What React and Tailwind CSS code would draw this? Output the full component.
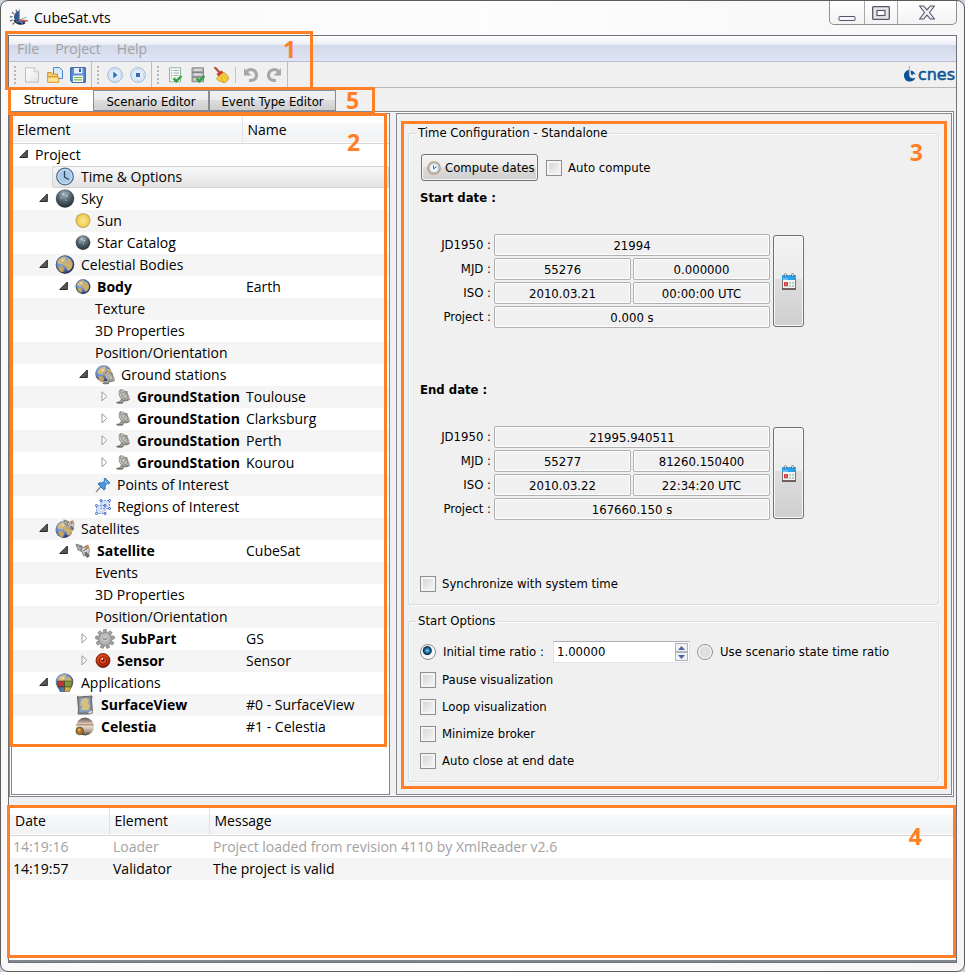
import React from "react";

const UI = "font-['Open_Sans','Noto_Sans',sans-serif]";
const FORM = "font-['DejaVu_Sans_Condensed','DejaVu_Sans',sans-serif]";

/* ---------- shared gradients ---------- */

function Gradients() {
  return (
    <svg width="0" height="0" className="absolute" aria-hidden="true">
      <defs>
        <radialGradient id="gEarth" cx="40%" cy="34%" r="66%">
          <stop offset="0" stopColor="#a8c4ec" />
          <stop offset=".6" stopColor="#5f82c0" />
          <stop offset="1" stopColor="#26345c" />
        </radialGradient>
        <radialGradient id="gSky" cx="45%" cy="28%" r="72%">
          <stop offset="0" stopColor="#a9b8c2" />
          <stop offset=".45" stopColor="#5b6b76" />
          <stop offset="1" stopColor="#222c33" />
        </radialGradient>
        <radialGradient id="gSun" cx="50%" cy="50%" r="50%">
          <stop offset="0" stopColor="#fbe992" />
          <stop offset=".75" stopColor="#efcf55" />
          <stop offset="1" stopColor="#b59a4a" />
        </radialGradient>
        <linearGradient id="gDish" x1="0" y1="0" x2="1" y2="1">
          <stop offset="0" stopColor="#e8e8e4" />
          <stop offset="1" stopColor="#84827c" />
        </linearGradient>
        <radialGradient id="gRed" cx="45%" cy="40%" r="60%">
          <stop offset="0" stopColor="#ff6a3a" />
          <stop offset=".6" stopColor="#d93a10" />
          <stop offset="1" stopColor="#6b1903" />
        </radialGradient>
        <linearGradient id="gJup" x1="0" y1="0" x2="0" y2="1">
          <stop offset="0" stopColor="#5e544a" />
          <stop offset=".22" stopColor="#a8988a" />
          <stop offset=".34" stopColor="#d8cbbb" />
          <stop offset=".4" stopColor="#b58a6c" />
          <stop offset=".48" stopColor="#e6dccf" />
          <stop offset=".75" stopColor="#b5a593" />
          <stop offset="1" stopColor="#4b3f37" />
        </linearGradient>
        <linearGradient id="gPaper" x1="0" y1="0" x2="1" y2="1">
          <stop offset="0" stopColor="#ffffff" />
          <stop offset="1" stopColor="#e4e4e4" />
        </linearGradient>
      </defs>
    </svg>
  );
}

const Land = () => (
  <g>
    <path d="M3 5.500 5.500 3 9 1.600l2.600 1-1.200 1.600 1 2-2.600.6-1.600 2.200L4.600 9 2.600 8z" fill="#d6b976" />
    <path d="m12 3.500 3 .5 2.600 4.500-.6 4-2.800 3.300-2-.8-.8-3-2.400-1.600.3-3 2.400-1z" fill="#cfae66" />
    <path d="m3.500 11 3.600.3 2 2.200-.8 3.200L6 17.200 3.600 14.500z" fill="#c7a45c" />
    <path d="m6 5 2.500-1 .6 1.400-2 .8z" fill="#efdfae" />
  </g>
);

const Svg = ({ s = 20, children, vb = 20 }) => (
  <svg width={s} height={s} viewBox={`0 0 ${vb} ${vb}`} className="block shrink-0" aria-hidden="true">
    {children}
  </svg>
);

const Clock = () => (
  <Svg>
    <circle cx="10" cy="9.500" r="8.300" fill="#a9c8e8" stroke="#4d6d92" strokeWidth="1.300" />
    <circle cx="10" cy="9.500" r="7" fill="none" stroke="#d7e7f6" strokeWidth=".8" />
    <path d="M9.500 4v6L14 12.500" fill="none" stroke="#2d4560" strokeWidth="1.300" />
  </Svg>
);
const Sky = ({ s = 20 }) => (
  <Svg s={s}>
    <circle cx="10" cy="9.500" r="9.200" fill="url(#gSky)" />
    <g fill="#e6edf2">
      <circle cx="8" cy="5" r=".8" />
      <circle cx="12" cy="7" r=".7" />
      <circle cx="6" cy="9" r=".6" />
      <circle cx="11" cy="11" r=".6" />
      <circle cx="13" cy="4" r=".6" />
    </g>
  </Svg>
);
const Sun = () => (
  <Svg s={16}>
    <circle cx="10" cy="9.500" r="9.300" fill="url(#gSun)" />
  </Svg>
);
const Earth = ({ s = 20 }) => (
  <Svg s={s}>
    <circle cx="10" cy="9.500" r="9.200" fill="url(#gEarth)" />
    <Land />
    <circle cx="10" cy="9.500" r="8.800" fill="none" stroke="#1b2440" strokeOpacity=".4" strokeWidth="1" />
  </Svg>
);
const DishShape = () => (
  <g>
    <ellipse cx="6" cy="17" rx="4.500" ry="1.500" fill="#77716d" />
    <path d="M9 11 5 17h5l3-4z" fill="#a39d97" stroke="#635d58" strokeWidth=".6" />
    <path d="M6.500 1C4 4 5 10 9.500 13.500c3 2.200 6.500 1.500 8.500-.5z" fill="url(#gDish)" stroke="#66625c" strokeWidth=".8" />
    <path d="M6.500 1c5-1 11 5 11.500 12-5 1-11.500-5-11.500-12z" fill="#c0bfb9" stroke="#77736c" strokeWidth=".8" />
    <path d="m12 8 3-5M8.500 4.500 15 3M15.500 11.500 15 3" stroke="#6e6a64" strokeWidth=".8" />
  </g>
);
const Dish = () => (
  <Svg s={16}>
    <DishShape />
  </Svg>
);
const GroundIcon = () => (
  <Svg>
    <circle cx="8.500" cy="8.500" r="8.300" fill="url(#gEarth)" />
    <Land />
    <g transform="translate(6.500 6) scale(.72)">
      <DishShape />
    </g>
  </Svg>
);
const Pin = () => (
  <Svg s={16} vb={16}>
    <path d="M1 15 6 9.500" stroke="#7e8890" strokeWidth="1.300" />
    <path d="m10 1 5 5-1.500.8-1.500-.3-2 2.500.2 3L9 13 3 7l1-1.200 3 .2 2.500-2L9.200 2z" fill="#4a9ae0" stroke="#1f5fa4" strokeWidth=".8" />
    <path d="m9.800 3.500 2.700 2.600" stroke="#c2e0f8" strokeWidth="1" />
  </Svg>
);
const Regions = () => (
  <Svg s={16} vb={16}>
    <path d="M5.500 1.500h9v8h-5v5h-8v-8h4z" fill="#d3e0f5" />
    <path d="M6 1.500h8.500v8H6zM1.500 6.500H10v8H1.500z" fill="none" stroke="#7d9bdc" strokeWidth="1" strokeDasharray="2 1" />
    <g fill="#fff" stroke="#2c55cc" strokeWidth="1">
      {[[6, 1.5], [14.5, 1.5], [14.5, 9.5], [1.5, 6.5], [10, 6.5], [1.5, 14.5], [10, 14.5]].map(([x, y]) => (
        <circle key={`${x}-${y}`} cx={x} cy={y} r="1" />
      ))}
    </g>
  </Svg>
);
const SatShape = () => (
  <g>
    <path d="m1 1 6 2 1 6-5-2z" fill="#8a8d90" stroke="#55585a" strokeWidth=".6" />
    <path d="m3 2 2 6M1.800 4.500l5.700 1.700" stroke="#c9ccd0" strokeWidth=".6" />
    <path d="m6 6 6-3.500 2.500 4-1 5.500-5 1z" fill="#d6d4d0" stroke="#6c6762" strokeWidth=".7" />
    <path d="m9 3.500 4-2 1.500 3-3 2.300z" fill="#b98b55" />
    <path d="m11.500 9 3.500 4-3 2-2.500-4z" fill="#6e6f70" />
    <path d="m8 8 3.500-2M8.500 10.500 12 9" stroke="#555" strokeWidth=".8" />
  </g>
);
const Sat = () => (
  <Svg s={16} vb={16}>
    <SatShape />
  </Svg>
);
const SatEarth = () => (
  <Svg>
    <g transform="translate(0 1)">
      <circle cx="9" cy="9.500" r="8.500" fill="url(#gEarth)" />
      <Land />
    </g>
    <g transform="translate(8 0) scale(.76)">
      <SatShape />
    </g>
  </Svg>
);
const Gear = () => (
  <Svg>
    <g fill="#a2a2a2" stroke="#6b6b6b" strokeWidth=".5">
      {[0, 40, 80, 120, 160, 200, 240, 280, 320].map((a) => (
        <path key={a} d="m8 5 .6-4.500h2.800L12 5z" transform={`rotate(${a} 10 10)`} />
      ))}
    </g>
    <circle cx="10" cy="10" r="6.200" fill="#b4b4b4" stroke="#777" strokeWidth=".5" />
    <circle cx="10" cy="8.500" r="3.300" fill="#8e8e8e" stroke="#e2e2e2" strokeWidth=".8" />
    <path d="M8 6.500h4v3H8z" fill="#c9c9c9" />
  </Svg>
);
const Sensor = () => (
  <Svg s={16} vb={16}>
    <circle cx="8" cy="7.500" r="7" fill="url(#gRed)" stroke="#5f1c08" strokeWidth=".8" />
    <circle cx="8" cy="7.500" r="3.800" fill="none" stroke="#8a1a00" strokeWidth="1" />
    <circle cx="8" cy="7" r="1.600" fill="#501408" />
    <circle cx="7.300" cy="6" r=".9" fill="#ffd8c8" />
  </Svg>
);
const Apps = () => (
  <Svg>
    <circle cx="9.500" cy="9" r="8.800" fill="url(#gEarth)" />
    <Land />
    <path d="M2.500 8h7v6H3z" fill="#b93a34" stroke="#3c2424" strokeWidth=".5" />
    <path d="M9.500 8h7.500l-.5 6h-7z" fill="#7f9a3c" stroke="#2e3a1c" strokeWidth=".5" />
    <path d="M3.500 14h6v4.500H5z" fill="#4779b0" stroke="#1e2e44" strokeWidth=".5" />
    <path d="M9.500 14h6.500l-1.500 4.500h-5z" fill="#d5ab45" stroke="#4a3a14" strokeWidth=".5" />
  </Svg>
);
const MapIcon = () => (
  <Svg>
    <path d="m2.500 1.500 2 .5L17 1l-.5 4 1 13-4 1H3l.5-4z" fill="#7b8896" stroke="#6a6558" strokeWidth="1" />
    <path d="m4.500 3 10-.5.5 3 .5 11-11 .5z" fill="#86a2c0" />
    <path d="m7 4 4-1 3 2-1 3 2 3-2 4H6l1.500-4L5 10l1-3z" fill="#d6bf80" />
    <path d="M13 19c0-2 1-3.500 4.500-3.500V18z" fill="#ddd" stroke="#777" strokeWidth=".5" />
  </Svg>
);
const Celestia = () => (
  <Svg>
    <circle cx="10" cy="9.500" r="9" fill="url(#gJup)" />
    <circle cx="4.700" cy="14" r="3.800" fill="#a5762e" stroke="#46300f" strokeWidth=".6" />
    <circle cx="4.300" cy="13" r="1.400" fill="#dcb25c" />
  </Svg>
);

const ArrowOpen = () => (
  <svg width="9" height="9" viewBox="0 0 9 9" aria-hidden="true">
    <path d="M8.300 0v7.500H.8z" fill="#595959" stroke="#262626" strokeWidth="1" />
  </svg>
);
const ArrowClosed = () => (
  <svg width="9" height="11" viewBox="0 0 9 11" aria-hidden="true">
    <path d="M3 .7v9.200l4.800-4.600z" fill="#fff" stroke="#9a9a9a" strokeWidth="1" />
  </svg>
);

/* ---------- title bar ---------- */

const AppIcon = () => (
  <svg width="20" height="20" viewBox="0 0 20 20" aria-hidden="true">
    <g stroke="#7b7b7b" strokeWidth="1.500">
      <path d="M7 1.500 7.800 4M3 4l2 2M.8 8.500 3.500 9M1 13l2.500-1M3.500 16.500l2-2" />
    </g>
    <path d="M10.500 2.500c-5.500 1.500-7 7-4 10.500 2.500 3 8 2.800 10.500.5l-6.500-1.500z" fill="#35598f" />
    <path d="M5 12c2 4 7 5 11 2.500" fill="none" stroke="#16233c" strokeWidth="1.600" />
    <path d="M10.500 1v11l4 5" fill="none" stroke="#8aa0c4" strokeWidth="1" />
    <path d="m10.500 12 7-3" stroke="#7fae9a" strokeWidth="1" />
    <path d="m10 12 9 1" stroke="#d0564a" strokeWidth="1.300" />
  </svg>
);

function TitleBar() {
  return (
    <header className="flex h-[34px] items-start justify-between pl-px">
      <div className="flex items-center gap-[5px] pt-[6px]">
        <AppIcon />
        <h1 className={`${UI} text-[14px] leading-[22px] text-black`}>CubeSat.vts</h1>
      </div>
      <div className="flex h-6 overflow-hidden rounded-b-[5px] border border-t-0 border-[#8f8f8f] bg-gradient-to-b from-white to-[#f3f3f3]">
        <button aria-label="Minimize" className="flex w-[34px] items-center justify-center">
          <svg width="18" height="18" viewBox="0 0 18 18">
            <rect x="1" y="12.500" width="16" height="4" rx=".5" fill="#f4f4f4" stroke="#52556b" />
          </svg>
        </button>
        <button aria-label="Maximize" className="flex w-[33px] items-center justify-center border-l border-[#a8a8a8]">
          <svg width="18" height="14" viewBox="0 0 18 14">
            <rect x=".7" y=".7" width="16.600" height="12.600" rx=".8" fill="#e6e6e6" stroke="#52556b" strokeWidth="1.300" />
            <rect x="5" y="4.500" width="8" height="5" fill="#fff" stroke="#52556b" strokeWidth="1.200" />
          </svg>
        </button>
        <button aria-label="Close" className="flex w-[59px] items-center justify-center border-l border-[#a8a8a8]">
          <svg width="18" height="15" viewBox="0 0 18 15">
            <path d="M1.500 1h4.200L9 4.800 12.300 1h4.200l-5 6.500 5 6.500h-4.200L9 10.200 5.700 14H1.500l5-6.500z" fill="#ededed" stroke="#52556b" strokeWidth="1.100" strokeLinejoin="round" />
          </svg>
        </button>
      </div>
    </header>
  );
}

/* ---------- callouts ---------- */

const Frame = ({ className }) => (
  <div className={`pointer-events-none absolute z-10 border-[3px] border-[#ff7f27] ${className}`} />
);
const Mark = ({ n, className }) => (
  <span className={`${UI} pointer-events-none absolute z-10 text-[23px] leading-6 font-bold text-[#ff7f27] ${className}`}>{n}</span>
);

/* ---------- tool bar ---------- */

const TNew = () => (
  <Svg s={16} vb={16}>
    <path d="M1.500.8h8.800l4.200 4v10.400h-13z" fill="url(#gPaper)" stroke="#bfbfbf" />
    <path d="M10.300.8v4h4.200" fill="#f4f4f4" stroke="#c6c6c6" />
  </Svg>
);
const TOpen = () => (
  <Svg s={16} vb={16}>
    <path d="M6.500.6h6l3 2.800v8.200h-9z" fill="#dcecfb" stroke="#4a83c6" />
    <path d="M.7 5.500h3.500l1 1.500h5.200v3H.7z" fill="#f7d074" stroke="#cf9226" />
    <path d="M.7 15.300V10h11v5.300z" fill="#fde49a" stroke="#d9962a" />
  </Svg>
);
const TSave = () => (
  <Svg s={16} vb={16}>
    <path d="M.7.7h14.600v14.600H2L.7 14z" fill="#5a8fd4" stroke="#2a569c" />
    <path d="M4 1h8.500v5.500H4z" fill="#e5eefa" />
    <path d="M9 1.500h2V5H9z" fill="#3a66a8" />
    <path d="M3 8.500h10V15H3z" fill="#f6faf0" />
    <path d="M3.800 10.500h8.400M3.800 12.800h8.400" stroke="#7bb648" strokeWidth="1.200" />
  </Svg>
);
const TRound = ({ children }) => (
  <Svg s={16} vb={16}>
    <circle cx="8" cy="8" r="7.300" fill="#f5f9fd" stroke="#8fb0d6" />
    <circle cx="8" cy="8" r="5.600" fill="#e4eefa" stroke="#bdd2ea" strokeWidth=".8" />
    {children}
  </Svg>
);
const Tick = () => <path d="m6.500 11.500 2.700 2.700L14.500 9" fill="none" stroke="#2fa33b" strokeWidth="2.400" />;
const TCheckDoc = () => (
  <Svg s={16} vb={16}>
    <path d="M2.500.8h11v14h-11z" fill="#f7faf8" stroke="#8fb39c" />
    <path d="M4.200 3.500h1M4.200 6h1M4.200 8.500h1M4.200 11h1" stroke="#3f8f57" strokeWidth="1.200" />
    <path d="M6.500 3.500h5.500M6.500 6h5.500M6.500 8.500h5M6.500 11h3" stroke="#9fb0a8" />
    <Tick />
  </Svg>
);
const TCheckDb = () => (
  <Svg s={16} vb={16}>
    <path d="M2 .8h11.500v14H2z" fill="#b5b8ba" stroke="#8a8d90" />
    <path d="M2 5.200h11.500M2 10h11.500" stroke="#6f7274" strokeWidth="1" />
    <path d="M4 3h7.500M4 7.500h7.500M4 12.500h4" stroke="#e3e5e6" strokeWidth="1.300" />
    <Tick />
  </Svg>
);
const TBroom = () => (
  <Svg s={16} vb={16}>
    <path d="m1.500 0 5.500 6" stroke="#a8502a" strokeWidth="2.200" />
    <path d="M3.500 7 8.500 3.500l2 2L5.500 9.500z" fill="#cf3a28" />
    <path d="m5.500 9.500 5-4C14 7 15.500 9.500 15.800 12l-4 3.700C8 15 4.500 13.500 3.500 11.500z" fill="#f4cf3f" stroke="#c08d16" strokeWidth=".8" />
    <path d="m7.500 9.500 3 5M10 8l4 4.500" stroke="#d9a824" strokeWidth=".8" />
  </Svg>
);
const TUndo = ({ flip }) => (
  <Svg s={16} vb={16}>
    <g transform={flip ? "translate(16 0) scale(-1 1)" : undefined}>
      <path d="M3.500 4.200C8 1 13.500 3 13.500 8.200c0 4-3.500 5.800-7.500 5.300" fill="none" stroke="#a6a6a6" strokeWidth="3" />
      <path d="M1 1.200v7.300h7.500z" fill="#a6a6a6" />
    </g>
  </Svg>
);

const ToolButton = ({ label, children }) => (
  <button aria-label={label} className="flex h-[23px] w-[23px] items-center justify-center">
    {children}
  </button>
);
const ToolGroup = ({ children }) => (
  <div className="flex h-[25px] items-center border-r border-[#bdbdbd] pr-[2px]">
    <div className="flex w-[11px] flex-col items-center gap-[2px]">
      {[0, 1, 2, 3, 4].map((i) => (
        <i key={i} className="size-[2px] bg-[#b5b5b5]" />
      ))}
    </div>
    {children}
  </div>
);

const Cnes = () => (
  <div className="flex items-center gap-[2px] pr-px text-[#0b5394]">
    <svg width="12" height="17" viewBox="0 0 12 17" aria-hidden="true">
      <path d="M5.300 0v9" stroke="#8fb0d0" strokeWidth="1" />
      <path d="M5 4C2 4.300 0 6.700 0 9.700 0 13 2.600 15.600 5.800 15.600c2.700 0 4.800-1.600 5.700-4-1.500 1-4 1-5.300-.4C5 10 4.600 7 5 4z" fill="currentColor" />
      <path d="M6.700 4.500c2.500.3 4.500 2.300 4.800 4.500L9 7.500 8.500 9.800C7 8.800 6.500 7 6.700 4.500z" fill="currentColor" />
    </svg>
    <span className="font-['DejaVu_Sans',sans-serif] text-[16px] leading-[22px] [-webkit-text-stroke:0.5px]">cnes</span>
  </div>
);

function Bars() {
  return (
    <div className="relative">
      <nav className={`${UI} flex h-[26px] items-center gap-4 border-b border-[#b8bccb] bg-[linear-gradient(#fff_0,#e9edf5_9px,#d1d8ea_9px,#e0e5f5_100%)] pl-2 text-[14px] text-[#a2a2a2]`}>
        <button>File</button>
        <button>Project</button>
        <button>Help</button>
      </nav>
      <div className="flex h-[26px] items-center justify-between border-b border-[#b8b8b8]">
        <div className="flex">
          <ToolGroup>
            <ToolButton label="New"><TNew /></ToolButton>
            <ToolButton label="Open"><TOpen /></ToolButton>
            <ToolButton label="Save"><TSave /></ToolButton>
          </ToolGroup>
          <ToolGroup>
            <ToolButton label="Run">
              <TRound><path d="M6.300 4.500v7L10.500 8z" fill="#2f6db5" /></TRound>
            </ToolButton>
            <ToolButton label="Stop">
              <TRound><path d="M6 6h4v4H6z" fill="#2f6db5" /></TRound>
            </ToolButton>
          </ToolGroup>
          <ToolGroup>
            <ToolButton label="Validate project"><TCheckDoc /></ToolButton>
            <ToolButton label="Validate data"><TCheckDb /></ToolButton>
            <ToolButton label="Clean"><TBroom /></ToolButton>
            <i className="mx-[3px] h-4 w-px bg-[#c4c4c4]" />
            <ToolButton label="Undo"><TUndo /></ToolButton>
            <ToolButton label="Redo"><TUndo flip /></ToolButton>
          </ToolGroup>
        </div>
        <Cnes />
      </div>
      <Frame className="-top-[5px] -bottom-[2px] -left-1 w-[308px]" />
      <Mark n="1" className="top-px left-[274px]" />
    </div>
  );
}

function Tabs() {
  const idle = "mt-[2px] h-[21px] border border-[#898c95] bg-[linear-gradient(#f2f2f2_0,#ebebeb_50%,#dcdcdc_50%,#cfcfcf_100%)] text-center";
  return (
    <div role="tablist" className={`${FORM} relative flex h-[23px] text-[13px] leading-[21px] text-black`}>
      <button role="tab" aria-selected="true" className="w-[84px] bg-white text-center leading-6">Structure</button>
      <button role="tab" aria-selected="false" className={`${idle} w-[116px]`}>Scenario Editor</button>
      <button role="tab" aria-selected="false" className={`${idle} w-[127px]`}>Event Type Editor</button>
      <Frame className="-top-px -bottom-1 -left-px w-[367px]" />
      <Mark n="5" className="top-0 left-[337px]" />
    </div>
  );
}

/* ---------- tree ---------- */

const INDENT = ["pl-0", "pl-5", "pl-10", "pl-15", "pl-20"];

const TREE = [
  { d: 0, open: true, label: "Project" },
  { d: 1, icon: <Clock />, label: "Time & Options", selected: true },
  { d: 1, open: true, icon: <Sky />, label: "Sky" },
  { d: 2, icon: <Sun />, label: "Sun" },
  { d: 2, icon: <Sky s={16} />, label: "Star Catalog" },
  { d: 1, open: true, icon: <Earth />, label: "Celestial Bodies" },
  { d: 2, open: true, icon: <Earth s={16} />, label: "Body", bold: true, name: "Earth" },
  { d: 3, label: "Texture" },
  { d: 3, label: "3D Properties" },
  { d: 3, label: "Position/Orientation" },
  { d: 3, open: true, icon: <GroundIcon />, label: "Ground stations" },
  { d: 4, open: false, icon: <Dish />, label: "GroundStation", bold: true, name: "Toulouse" },
  { d: 4, open: false, icon: <Dish />, label: "GroundStation", bold: true, name: "Clarksburg" },
  { d: 4, open: false, icon: <Dish />, label: "GroundStation", bold: true, name: "Perth" },
  { d: 4, open: false, icon: <Dish />, label: "GroundStation", bold: true, name: "Kourou" },
  { d: 3, icon: <Pin />, label: "Points of Interest" },
  { d: 3, icon: <Regions />, label: "Regions of Interest" },
  { d: 1, open: true, icon: <SatEarth />, label: "Satellites" },
  { d: 2, open: true, icon: <Sat />, label: "Satellite", bold: true, name: "CubeSat" },
  { d: 3, label: "Events" },
  { d: 3, label: "3D Properties" },
  { d: 3, label: "Position/Orientation" },
  { d: 3, open: false, icon: <Gear />, label: "SubPart", bold: true, name: "GS" },
  { d: 3, open: false, icon: <Sensor />, label: "Sensor", bold: true, name: "Sensor" },
  { d: 1, open: true, icon: <Apps />, label: "Applications" },
  { d: 2, icon: <MapIcon />, label: "SurfaceView", bold: true, name: "#0 - SurfaceView" },
  { d: 2, icon: <Celestia />, label: "Celestia", bold: true, name: "#1 - Celestia" },
];

const HEAD = "bg-[linear-gradient(#fff_0,#fff_9px,#f7f8fa_9px,#f1f2f4_100%)]";
const SELECTED = "border-y border-[#d4d4d4] bg-gradient-to-b from-[#f8f8f8] to-[#e3e3e3]";

function Tree() {
  return (
    <section className="relative w-[379px] shrink-0 border border-[#828790] bg-white">
      <table className={`${UI} w-full table-fixed border-collapse text-[14px] leading-[22px] text-black`}>
        <thead>
          <tr className={`${HEAD} h-[29px] border-b border-[#d5d5d5] text-left`}>
            <th className="w-[230px] border-r border-[#e2e3e5] pt-1 pl-[5px] font-normal">Element</th>
            <th className="pt-1 pl-[5px] font-normal">Name</th>
          </tr>
        </thead>
        <tbody>
          {TREE.map((r, i) => (
            <tr key={i} className={`h-[22px] ${i % 2 ? "bg-[#f5f5f5]" : "bg-white"}`}>
              <td className="p-0">
                <div className={`flex h-[22px] ${INDENT[r.d]}`}>
                  <span className="flex w-5 shrink-0 items-center pl-[7px]">
                    {r.open === true && <ArrowOpen />}
                    {r.open === false && <ArrowClosed />}
                  </span>
                  <span className={`flex min-w-0 flex-1 items-center gap-[6px] whitespace-nowrap ${r.selected ? `${SELECTED} rounded-l-[3px] border-l pl-[2px]` : "pl-[3px]"}`}>
                    {r.icon}
                    <span className={r.bold ? "font-bold" : ""}>{r.label}</span>
                  </span>
                </div>
              </td>
              <td className="p-0">
                <div className={`h-[22px] pl-1 ${r.selected ? `${SELECTED} rounded-r-[3px] border-r` : ""}`}>{r.name}</div>
              </td>
            </tr>
          ))}
        </tbody>
      </table>
      <Frame className="-top-px -left-[2px] h-[634px] w-[377px]" />
      <Mark n="2" className="top-4 left-[335px]" />
    </section>
  );
}

/* ---------- form ---------- */

const BOX = "size-4 shrink-0 appearance-none border border-[#8e8f8f] bg-gradient-to-br from-[#cfd3d8] to-[#f8f8f8] shadow-[inset_0_0_0_2px_#f4f4f4]";
const RADIO = "size-4 shrink-0 appearance-none rounded-full border border-[#8e8f8f] bg-[radial-gradient(circle,#e3e3e3_0,#dcdcdc_5px,#f6f6f6_6px)] checked:bg-[radial-gradient(circle_at_45%_40%,#8fdcff_0,#1d7fb8_2px,#0d3350_4px,#f6f6f6_5px)]";
const FACE = "border border-[#707070] rounded-[3px] bg-[linear-gradient(#f2f2f2_0,#ebebeb_48%,#dddddd_48%,#cfcfcf_100%)] shadow-[inset_0_0_0_1px_#f8f8f8]";
const GROUP = "rounded-[3px] border border-[#d5dfe5] pl-[11px] shadow-[inset_1px_1px_0_#fcfcfc,1px_1px_0_#fcfcfc]";

const Check = ({ id, children }) => (
  <div className="flex h-4 items-center gap-[6px]">
    <input id={id} type="checkbox" className={BOX} />
    <label htmlFor={id}>{children}</label>
  </div>
);

const Calendar = () => (
  <svg width="14" height="17" viewBox="0 0 14 17" aria-hidden="true">
    <path d="M.5 3h13v13H.5z" fill="#f3f5f5" stroke="#7c6f6f" />
    <path d="M0 2h14v5H0z" fill="#2f9fe8" />
    <path d="M1 6h5" stroke="#a8dcff" />
    <path d="M3.500.5v3M10.500.5v3" stroke="#5a6670" strokeWidth="2" />
    <path d="M3.500 1v2M10.500 1v2" stroke="#e8eef2" strokeWidth=".8" />
    <path d="M2 9h10v5H2z" fill="#b9c9c6" />
    <path d="M6.500 9v5M9.500 9v5M2 11.500h10" stroke="#f3f5f5" />
    <path d="M2 9.200h4v3.600H2z" fill="#e02f2f" />
    <path d="M3.300 10.500h1.400v1H3.300z" fill="#ffb0a8" />
    <path d="M0 16h14" stroke="#5b3e3e" strokeWidth="1.400" />
  </svg>
);

function DateBlock({ id, title, jd, mjd, iso, project }) {
  const rows = [
    ["JD1950 :", [jd]],
    ["MJD :", mjd],
    ["ISO :", iso],
    ["Project :", [project]],
  ];
  return (
    <div className="flex flex-col gap-7">
      <h2 className="leading-4 font-bold">{title}</h2>
      <div className="flex items-center gap-[3px]">
        <div className="grid grid-cols-[72px_137px_137px] gap-[2px]">
          {rows.map(([label, values]) => (
            <React.Fragment key={label}>
              <label htmlFor={`${id}-${label}`} className="pr-px text-right leading-[22px]">{label}</label>
              {values.map((v, i) => (
                <input
                  key={i}
                  id={i === 0 ? `${id}-${label}` : undefined}
                  aria-label={i === 0 ? undefined : `${label} time`}
                  readOnly
                  defaultValue={v}
                  className={`h-[22px] w-full rounded-[2px] border border-[#afafaf] bg-[#f0f0f0] text-center shadow-[inset_0_0_0_1px_#fff] ${values.length === 1 ? "col-span-2" : ""}`}
                />
              ))}
            </React.Fragment>
          ))}
        </div>
        <button aria-label={`Pick ${title}`} className={`${FACE} flex h-[92px] w-[31px] items-center justify-center`}>
          <Calendar />
        </button>
      </div>
    </div>
  );
}

const Step = ({ label, d }) => (
  <button aria-label={label} className="flex h-[9px] w-[13px] items-center justify-center border border-[#b0b4bc] bg-[#f2f2f2]">
    <svg width="7" height="4" viewBox="0 0 7 4"><path d={d} fill="#4a62a8" /></svg>
  </button>
);

function Form() {
  return (
    <section className={`${FORM} relative min-w-0 flex-1 border border-[#828790] bg-[#f0f0f0] pt-[11px] pr-3 pb-3 pl-[11px] text-[13px] leading-4 text-black`}>
      <fieldset className={`${GROUP} pb-3`}>
        <legend className="-ml-1 px-[2px]">Time Configuration - Standalone</legend>
        <div className="flex items-center gap-2 pt-[13px] pb-[9px]">
          <button className={`${FACE} ml-px flex h-[27px] w-[117px] items-center gap-1 pl-[5px] whitespace-nowrap`}>
            <Svg s={14} vb={16}>
              <circle cx="8" cy="8" r="7" fill="#eef4fb" stroke="#b99a63" strokeWidth="1.600" />
              <circle cx="8" cy="8" r="5.300" fill="none" stroke="#8fb0d8" />
              <path d="M7.500 5v4L11 6.500" fill="none" stroke="#3d5c8a" strokeWidth="1.100" />
            </Svg>
            Compute dates
          </button>
          <Check id="auto-compute">Auto compute</Check>
        </div>
        <DateBlock id="start" title="Start date :" jd="21994" mjd={["55276", "0.000000"]} iso={["2010.03.21", "00:00:00 UTC"]} project="0.000 s" />
        <div className="pt-[54px] pb-14">
          <DateBlock id="end" title="End date :" jd="21995.940511" mjd={["55277", "81260.150400"]} iso={["2010.03.22", "22:34:20 UTC"]} project="167660.150 s" />
        </div>
        <Check id="sync">Synchronize with system time</Check>
      </fieldset>
      <fieldset className={`${GROUP} mt-2 pb-3`}>
        <legend className="-ml-1 px-[2px]">Start Options</legend>
        <div className="flex items-center pt-3 pb-[9px]">
          <input id="initial-ratio" type="radio" name="ratio" defaultChecked className={RADIO} />
          <label htmlFor="initial-ratio" className="w-[117px] pl-[7px]">Initial time ratio :</label>
          <div className="flex h-[22px] w-[137px] items-center justify-between border border-[#e2e3ea] border-t-[#abadb3] bg-white pr-px">
            <input aria-label="Initial time ratio value" defaultValue="1.00000" className="w-[100px] pl-[3px] outline-none" />
            <div className="flex flex-col">
              <Step label="Increase" d="M0 4h7L3.500 0z" />
              <Step label="Decrease" d="M0 0h7L3.500 4z" />
            </div>
          </div>
          <input id="scenario-ratio" type="radio" name="ratio" className={`${RADIO} ml-[7px]`} />
          <label htmlFor="scenario-ratio" className="pl-[7px]">Use scenario state time ratio</label>
        </div>
        <div className="flex flex-col gap-[11px]">
          <Check id="pause">Pause visualization</Check>
          <Check id="loop">Loop visualization</Check>
          <Check id="minimize">Minimize broker</Check>
          <Check id="autoclose">Auto close at end date</Check>
        </div>
      </fieldset>
      <Frame className="top-[7px] right-1 bottom-[5px] left-1" />
      <Mark n="3" className="top-[26px] right-7" />
    </section>
  );
}

/* ---------- log ---------- */

function Log() {
  return (
    <section className="relative mt-[9px] min-h-[155px] flex-1 border-b-2 border-[#828790] bg-white">
      <table className={`${UI} w-full table-fixed border-collapse text-[14px] leading-[22px] text-black`}>
        <thead>
          <tr className={`${HEAD} h-[29px] border-b border-[#d5d5d5] text-left`}>
            <th className="w-[100px] border-r border-[#e2e3e5] p-0 pt-[2px] pl-[6px] font-normal">Date</th>
            <th className="w-[100px] border-r border-[#e2e3e5] p-0 pt-[2px] pl-[5px] font-normal">Element</th>
            <th className="p-0 pt-[2px] pl-[5px] font-normal">Message</th>
          </tr>
        </thead>
        <tbody>
          <tr className="text-[#a2a2a2]">
            <td className="p-0 pl-1">14:19:16</td>
            <td className="p-0 pl-1">Loader</td>
            <td className="p-0 pl-1">Project loaded from revision 4110 by XmlReader v2.6</td>
          </tr>
          <tr className="bg-[#f5f5f5]">
            <td className="p-0 pl-1">14:19:57</td>
            <td className="p-0 pl-1">Validator</td>
            <td className="p-0 pl-1">The project is valid</td>
          </tr>
        </tbody>
      </table>
      <Frame className="-top-px right-0 bottom-[2px] -left-[2px]" />
      <Mark n="4" className="top-[18px] right-[34px]" />
    </section>
  );
}

export default function App() {
  return (
    <div className="min-h-screen bg-[#c9d3dd]">
      <Gradients />
      <div className="flex min-h-screen flex-col rounded-[8px] border border-[#5c5c5c] bg-gradient-to-r from-[#f9f9f9] via-[#fdfdfd] to-[#f6f6f6] px-[7px] pb-2">
        <TitleBar />
        <main className="flex flex-1 flex-col border border-[#6f7278] bg-[#f0f0f0]">
          <Bars />
          <Tabs />
          <div className="mr-[2px] flex gap-[6px] border border-[#828790] bg-[#f0f0f0] p-px shadow-[inset_0_0_0_1px_#fff]">
            <Tree />
            <Form />
          </div>
          <Log />
        </main>
      </div>
    </div>
  );
}
